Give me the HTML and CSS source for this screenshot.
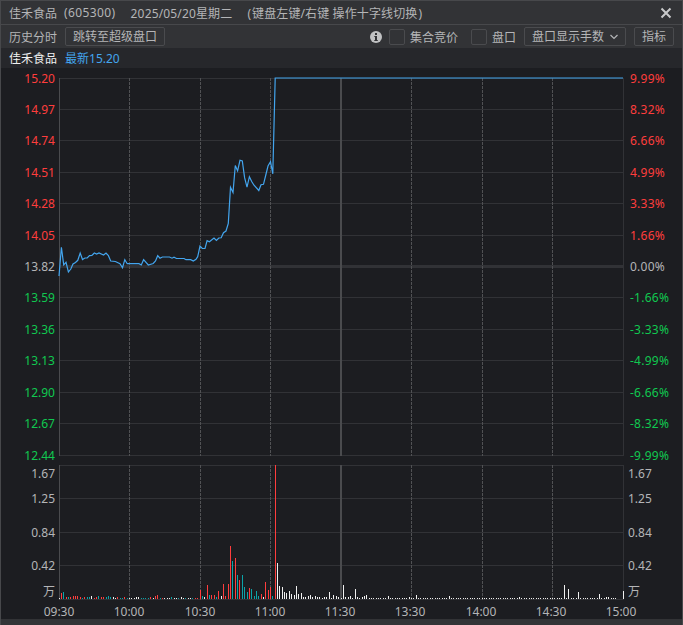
FILE: index.html
```
<!DOCTYPE html>
<html lang="zh-CN">
  <head>
    <meta charset="UTF-8" />
    <meta name="viewport" content="width=device-width, initial-scale=1.0" />
    <title>历史分时</title>
    <link rel="stylesheet" href="styles.css">
  </head>
  <body>
    <div class="window">
      <header class="titlebar">
        <span class="stock">佳禾食品</span>
        <span class="code">(605300)</span>
        <span class="date">2025/05/20星期二</span>
        <span class="hint">(<span class="keys">键盘左键/右键 操作十字线切换</span>)</span>
        <svg class="close" width="12" height="12" viewBox="0 0 12 12">
          <path d="M1.5 1.5l9 9M10.5 1.5l-9 9" />
        </svg>
      </header>
      <div class="toolbar">
        <span class="tab">历史分时</span>
        <button class="btn jump">跳转至超级盘口</button>
        <svg class="info" width="12" height="12" viewBox="0 0 12 12">
          <circle cx="6" cy="6" r="6" />
          <path d="M5 2h2v2H5zM4.3 5H7v4h.8v1H4.3V9H5V6h-.7z" />
        </svg>
        <label class="check auction"><i></i>集合竞价</label>
        <label class="check depth"><i></i>盘口</label>
        <button class="btn select">盘口显示手数
          <svg width="8" height="6" viewBox="0 0 8 6"><path d="M.5 1L4 4.5 7.5 1" /></svg>
        </button>
        <button class="btn">指标</button>
      </div>
      <div class="quote"><span class="name">佳禾食品</span><span class="last">最新15.20</span></div>
      <svg class="chart" id="chart" width="681" height="551" viewBox="1 68 681 551"></svg>
      <footer class="bottom"></footer>
    </div>
    <script src="chart.js"></script>
  </body>
</html>
```

FILE: styles.css
```
* {
  box-sizing: border-box;
}
body {
  margin: 0;
  background: #1c1d21;
  font-family: "Noto Sans", "Noto Sans CJK SC", sans-serif;
  font-size: 12px;
  color: #b4b5b7;
}
.window {
  display: flex;
  flex-direction: column;
  width: 683px;
  height: 625px;
  border: 1px solid #47484b;
  border-bottom: 0;
  overflow: hidden;
}
.titlebar {
  display: flex;
  align-items: center;
  height: 24px;
  padding: 0 10px 0 8px;
  background: #323336;
  border-bottom: 1px solid #47484b;
  white-space: nowrap;
}
.code {
  margin-left: 7px;
  letter-spacing: 0.4px;
}
.date {
  margin-left: 15px;
  letter-spacing: 0.15px;
}
.hint {
  margin-left: 15px;
}
.keys {
  margin: 0 1px;
  letter-spacing: 0.12px;
}
.close {
  margin-left: auto;
  fill: none;
  stroke: #c8c9ca;
  stroke-width: 2;
}
.toolbar {
  display: flex;
  align-items: center;
  height: 23px;
  padding: 0 8px;
  background: #323336;
  white-space: nowrap;
}
.btn {
  height: 19px;
  padding: 0 7px;
  border: 1px solid #4a4b4e;
  border-radius: 2px;
  background: transparent;
  font: inherit;
  line-height: 17px;
  color: inherit;
}
.jump {
  margin-left: 8px;
}
.info {
  margin-left: auto;
  fill: #c0c1c2;
}
.info path {
  fill: #323336;
}
.check {
  display: flex;
  align-items: center;
  gap: 5px;
}
.check i {
  width: 16px;
  height: 16px;
  border: 1px solid #4a4b4e;
  border-radius: 2px;
}
.auction {
  margin-left: 7px;
}
.depth {
  margin-left: 13px;
}
.select {
  display: flex;
  align-items: center;
  gap: 6px;
  margin: 0 8px;
}
.select svg {
  fill: none;
  stroke: #b4b5b7;
  stroke-width: 1.2;
}
.quote {
  display: flex;
  align-items: center;
  gap: 8px;
  height: 20px;
  padding-left: 8px;
  background: #26272b;
}
.name {
  color: #f0f0f0;
}
.last {
  color: #43a5ee;
}
.chart {
  display: block;
  flex: none;
}
.bottom {
  flex: 1;
  background: #323336;
}
.grid {
  fill: #313236;
}
.axis {
  fill: #4a4b4e;
}
.dash {
  stroke: #505154;
  stroke-dasharray: 3 1;
}
.price {
  fill: none;
  stroke: #43a5ee;
  stroke-width: 1.2;
}
.pct {
  letter-spacing: 0.25px;
}
.up {
  fill: #ff3d3d;
}
.down {
  fill: #10c850;
}
.flat {
  fill: #b4b5b7;
}
.vol-r {
  fill: #ff3d3d;
}
.vol-c {
  fill: #0ba3a8;
}
.vol-w {
  fill: #f0f0f0;
}
```

FILE: chart.js
```
const chart = document.getElementById("chart");
const LEFT = 59, RIGHT = 623, STEP = 2.35, BASE = 599;

function add(tag, attrs, text) {
  const el = document.createElementNS("http://www.w3.org/2000/svg", tag);
  for (const key in attrs) el.setAttribute(key, attrs[key]);
  if (text) el.textContent = text;
  chart.appendChild(el);
}

function rect(x, y, width, height, cls) {
  add("rect", { x, y, width, height, class: cls });
}

// price rows, top to bottom
const rows = [
  [78, "15.20", "9.99%"], [109, "14.97", "8.32%"], [140, "14.74", "6.66%"],
  [172, "14.51", "4.99%"], [203, "14.28", "3.33%"], [235, "14.05", "1.66%"],
  [266, "13.82", "0.00%"], [297, "13.59", "-1.66%"], [329, "13.36", "-3.33%"],
  [360, "13.13", "-4.99%"], [392, "12.90", "-6.66%"], [423, "12.67", "-8.32%"],
  [455, "12.44", "-9.99%"],
];
rows.forEach(([y, price, pct], i) => {
  const cls = i < 6 ? "up" : i > 6 ? "down" : "flat";
  rect(LEFT, i === 6 ? y - 1 : y, RIGHT - LEFT, i === 6 ? 3 : 1, "grid");
  add("text", { x: 55, y: y + 5, "text-anchor": "end", class: cls }, price);
  add("text", { x: 630, y: y + 5, class: "pct " + cls }, pct);
});

const volumes = [[465, 478, "1.67"], [498, 503, "1.25"], [532, 537, "0.84"], [565, 570, "0.42"], [599, 596, "万"]];
volumes.forEach(([y, textY, label]) => {
  rect(LEFT, y, RIGHT - LEFT, 1, "grid");
  add("text", { x: 55, y: textY, "text-anchor": "end", class: "flat" }, label);
  add("text", { x: 628, y: textY, class: "flat" }, label);
});

const times = [
  [59, "09:30"], [129, "10:00"], [200, "10:30"], [270, "11:00"], [340, "11:30"],
  [411, "13:30"], [482, "14:00"], [552, "14:30"], [623, "15:00"],
];
times.forEach(([x, label], i) => {
  [[78, 456], [465, 600]].forEach(([top, bottom]) => {
    if (i === 0 || i === 4) rect(x, top, i ? 2 : 1, bottom - top, "axis");
    else if (i === 8) rect(x, top, 1, bottom - top, "grid");
    else add("line", { x1: x + 0.5, x2: x + 0.5, y1: top, y2: bottom, class: "dash" });
  });
  const textX = i === 8 ? 621 : i > 4 ? x - 1 : x;
  add("text", { x: textX, y: 616, "text-anchor": "middle", class: "flat" }, label);
});

// one bar per minute: colour (r, c, w) + height
const bars = (
  "w1 r6 c7 r2 c2 r2 r3 r3 r3 r2 c1 r2 c2 c2 w3 r1 r2 c3 r2 r2 c2 c3 c2 w2 w1 r2 c1 c1 r2 c1 " +
  "w1 w1 w1 w2 w2 c1 c1 c1 c1 r2 w1 r3 r4 c1 r1 w1 w1 w1 c2 w1 w1 c1 w2 w1 c1 w1 w1 c1 r1 r1 " +
  "r9 c3 w2 r14 c4 r4 r4 c2 r8 w3 r15 r3 r15 r53 c38 r41 c24 r19 c24 c12 c7 r11 c10 c3 c8 c3 r5 w2 r17 r9 " +
  "r12 c3 r134 w36 w13 w12 w7 w6 w8 w5 w4 w13 w5 w6 w2 w2 w3 w4 w2 w3 w2 w2 w1 w2 w2 w7 w1 w4 w3 w2 " +
  "w1 w14 w2 w2 w3 w1 w10 w2 w1 w2 w3 w4"
).split(" ");
const later = { 140: 3, 149: 2, 152: 4, 166: 3, 196: 2, 215: 14, 217: 10, 221: 7, 230: 5, 233: 2, 234: 2, 240: 8 };
for (let i = bars.length; i <= 240; i++) {
  bars.push("w" + (later[i] || (i > 237 ? 0 : 1)));
}
bars.forEach((bar, i) => {
  const h = +bar.slice(1);
  rect(Math.floor(LEFT + i * STEP + 0.001), BASE - h, 1, h, "vol-" + bar[0]);
});

add("polyline", {
  class: "price",
  points:
    "59,276 61.4,247.3 63.7,264.8 66,262.3 68.4,272 70.8,269 73,264 75.5,262.5 77.8,260.3 80.2,253 82.5,259.5 " +
    "84.9,258 87.2,258 89.5,255.7 91.9,255.5 94.3,253 96.6,254 99,253 103.6,255 106,253 108.4,255.7 110.7,261 " +
    "115.4,261.5 120,263.7 122.5,267.7 124.8,259.7 127.2,263.7 139,263.7 141.3,265 143.6,259.7 148.3,265 " +
    "153.2,263.5 155.5,261 157.7,255.7 160,258.2 162.4,257 169.5,257 172,258.2 174,257.2 176.5,258.5 184,258.5 " +
    "186,259.7 190.7,259.7 193.3,261 196,259.3 197.7,256.7 200,246 202.3,248.5 205,248.5 207.1,240.7 209.4,241.7 " +
    "214,238 216.4,240.5 218.8,238 221.2,237.8 223.5,232.7 226,231 228.3,223.3 230.5,187.3 233,192.5 235.3,165.5 " +
    "237.6,170.9 240,160.3 242.3,161 244.6,177.7 247,187.2 249.4,176.7 251.7,181.5 254,185.2 258.8,190.5 " +
    "261,184.7 263.5,184.3 265.8,175 268,166 270.5,161.7 272.8,173.8 275.2,78 623,78",
});
```
